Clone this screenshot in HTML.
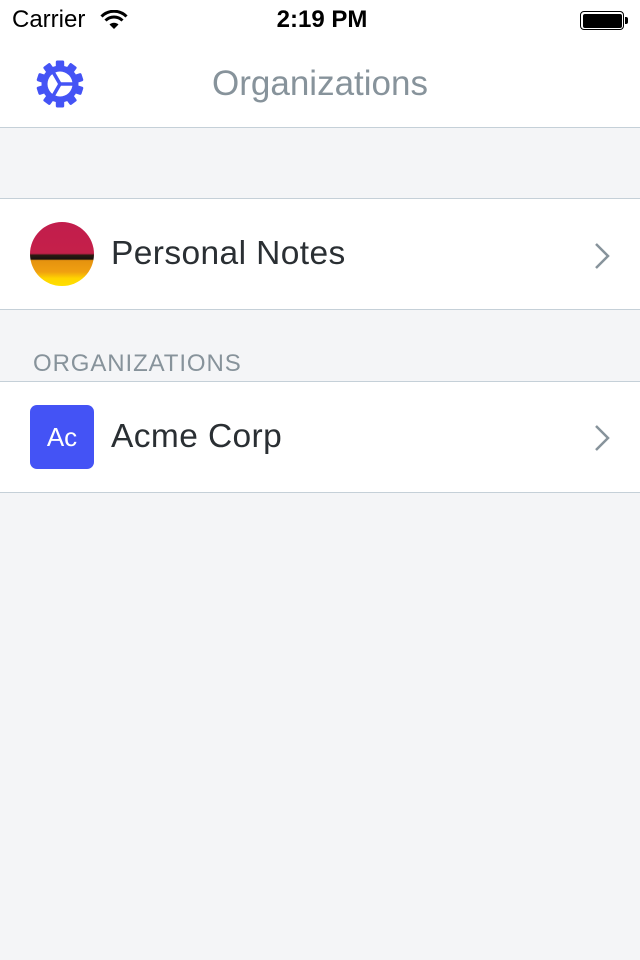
<!DOCTYPE html>
<html><head><meta charset="utf-8"><style>
*{margin:0;padding:0;box-sizing:border-box}
body{width:640px;height:960px;background:#f4f5f7;font-family:"Liberation Sans",sans-serif;position:relative;overflow:hidden}
.abs{position:absolute}
.top{left:0;top:0;width:640px;height:128px;background:#fff;border-bottom:1px solid #c5d0d8}
.row{left:0;width:640px;height:112px;background:#fff;border-top:1px solid #c5d0d8;border-bottom:1px solid #c5d0d8}
.lbl{font-size:33.5px;color:#2a2f33;letter-spacing:0.4px}
</style></head><body>
<div class="abs top"></div>
<div class="abs" style="left:12px;top:6px;font-size:24px;color:#000">Carrier</div>
<svg class="abs" style="left:100px;top:10px" width="28" height="20" viewBox="0 0 28 20"><path d="M14 19 L9.5 14.5 A6.5 6.5 0 0 1 18.5 14.5 Z" fill="#000"/><path d="M5.5 10.5 A12 12 0 0 1 22.5 10.5" stroke="#000" stroke-width="3" fill="none"/><path d="M1.5 6.5 A17.5 17.5 0 0 1 26.5 6.5" stroke="#000" stroke-width="3" fill="none"/></svg>
<div class="abs" style="left:0;width:640px;text-align:center;top:6px;font-size:24px;font-weight:bold;color:#000;padding-left:4px">2:19 PM</div>
<div class="abs" style="left:580px;top:11px;width:44px;height:19px;border:1.5px solid #000;border-radius:4px;padding:1.5px"><div style="width:100%;height:100%;background:#000;border-radius:2px"></div></div>
<div class="abs" style="left:625px;top:17px;width:3px;height:7px;background:#000;border-radius:0 2px 2px 0"></div>
<svg class="abs" style="left:35px;top:59px" width="50" height="50" viewBox="-25 -25 50 50">
<g fill="#4453f5">
<circle r="18.5"/>
<g id="t"><rect x="-4.2" y="-23.5" width="8.4" height="8" rx="1.5"/></g>
<use href="#t" transform="rotate(36)"/><use href="#t" transform="rotate(72)"/><use href="#t" transform="rotate(108)"/><use href="#t" transform="rotate(144)"/><use href="#t" transform="rotate(180)"/><use href="#t" transform="rotate(216)"/><use href="#t" transform="rotate(252)"/><use href="#t" transform="rotate(288)"/><use href="#t" transform="rotate(324)"/>
</g>
<circle r="12.5" fill="#fff"/>
<g stroke="#4453f5" stroke-width="3.5"><line x1="0" y1="0" x2="13" y2="0"/><line x1="0" y1="0" x2="-6.5" y2="-11.3"/><line x1="0" y1="0" x2="-6.5" y2="11.3"/></g>
</svg>
<div class="abs" style="left:0;width:640px;text-align:center;top:64px;font-size:35px;color:#87939b">Organizations</div>

<div class="abs row" style="top:198px"></div>
<div class="abs" style="left:30px;top:222px;width:64px;height:64px;border-radius:50%;overflow:hidden;background:linear-gradient(#c21d4c 0%,#c4204a 49%,#2a1a10 52%,#1a1010 58%,#e5920f 60%,#f0a010 78%,#ffd400 88%,#ffe000 100%)"></div>
<div class="abs lbl" style="left:111px;top:235px">Personal Notes</div>
<svg class="abs" style="left:590px;top:240px" width="24" height="32"><path d="M6 4 L18 16 L6 28" stroke="#87939b" stroke-width="2.5" fill="none"/></svg>

<div class="abs" style="left:33px;top:350px;font-size:24px;color:#87939b;letter-spacing:0.9px">ORGANIZATIONS</div>

<div class="abs row" style="top:381px"></div>
<div class="abs" style="left:30px;top:405px;width:64px;height:64px;border-radius:7px;background:#4453f5;color:#fff;font-size:26px;text-align:center;line-height:64px">Ac</div>
<div class="abs lbl" style="left:111px;top:418px">Acme Corp</div>
<svg class="abs" style="left:590px;top:422px" width="24" height="32"><path d="M6 4 L18 16 L6 28" stroke="#87939b" stroke-width="2.5" fill="none"/></svg>
</body></html>
